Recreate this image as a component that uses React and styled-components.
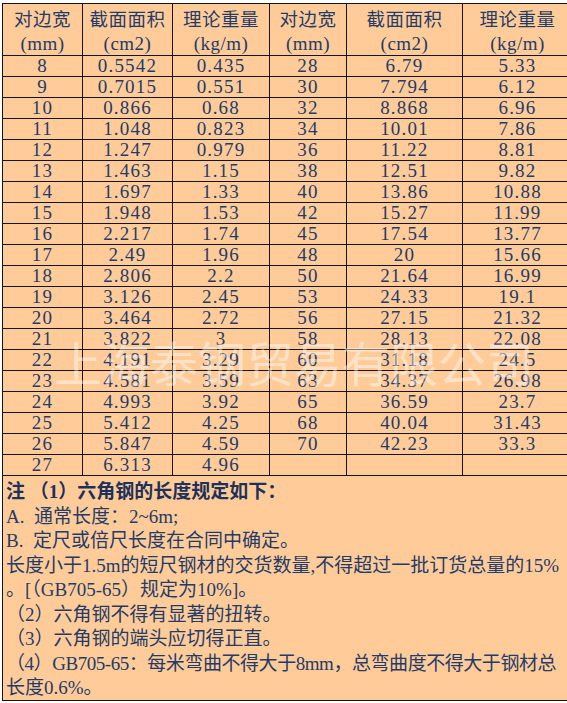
import React from "react";
import styled, { createGlobalStyle } from "styled-components";

const GlobalStyle = createGlobalStyle`
  html, body {
    margin: 0;
    padding: 0;
    background: #fff;
    overflow: hidden;
  }
`;

const Page = styled.div`
  position: relative;
  width: 567px;
  height: 703px;
  padding: 3px 0 0 2px;
  box-sizing: border-box;
  overflow: hidden;
`;

const Sheet = styled.div`
  display: grid;
  grid-template-columns: 80px 90px 97px 77px 116px 110px;
  grid-template-rows: 52px repeat(20, 21px) 225px;
  width: max-content;
  background: #ffcc99;
  border-top: 1px solid #151515;
  border-left: 1px solid #151515;
  color: #243b68;
`;

const Cell = styled.div`
  box-sizing: border-box;
  border-right: 1px solid #151515;
  border-bottom: 1px solid #151515;
  overflow: hidden;
`;

const HeadCell = styled(Cell)`
  display: flex;
  flex-direction: column;
  align-items: center;
  padding-top: 1px;
  line-height: 26px;
`;

const HeadTitle = styled.span`
  font-family: "Noto Sans CJK SC", sans-serif;
  font-size: 18.5px;
  letter-spacing: 0.5px;
`;

const HeadUnit = styled.span`
  font-family: "Liberation Serif", "Noto Sans CJK SC", serif;
  font-size: 19px;
  letter-spacing: 0.5px;
`;

const NumCell = styled(Cell)`
  font-family: "Liberation Serif", serif;
  font-size: 19px;
  letter-spacing: 1.2px;
  line-height: 20px;
  text-align: center;
`;

const Notes = styled(Cell)`
  grid-column: 1 / -1;
  padding: 4px 0 0 3px;
  font-family: "Liberation Serif", "Noto Sans CJK SC", serif;
  font-size: 19px;
  line-height: 24.5px;
`;

const NoteLine = styled.div`
  white-space: pre;
  font-weight: ${(p) => (p.$bold ? 700 : 400)};
  color: ${(p) => (p.$bold ? "#1d315a" : "inherit")};
  letter-spacing: ${(p) => (p.$tight ? "-0.45px" : "0")};
`;

const Watermark = styled.div`
  position: absolute;
  left: 54px;
  top: 337px;
  font-family: "Noto Sans CJK SC", sans-serif;
  font-size: 48px;
  line-height: 1;
  white-space: nowrap;
  color: rgba(255, 255, 255, 0.45);
  pointer-events: none;
`;

const heads = [
  ["对边宽", "(mm)"],
  ["截面面积", "(cm2)"],
  ["理论重量", "(kg/m)"],
];

const left = [
  ["8", "0.5542", "0.435"],
  ["9", "0.7015", "0.551"],
  ["10", "0.866", "0.68"],
  ["11", "1.048", "0.823"],
  ["12", "1.247", "0.979"],
  ["13", "1.463", "1.15"],
  ["14", "1.697", "1.33"],
  ["15", "1.948", "1.53"],
  ["16", "2.217", "1.74"],
  ["17", "2.49", "1.96"],
  ["18", "2.806", "2.2"],
  ["19", "3.126", "2.45"],
  ["20", "3.464", "2.72"],
  ["21", "3.822", "3"],
  ["22", "4.191", "3.29"],
  ["23", "4.581", "3.59"],
  ["24", "4.993", "3.92"],
  ["25", "5.412", "4.25"],
  ["26", "5.847", "4.59"],
  ["27", "6.313", "4.96"],
];

const right = [
  ["28", "6.79", "5.33"],
  ["30", "7.794", "6.12"],
  ["32", "8.868", "6.96"],
  ["34", "10.01", "7.86"],
  ["36", "11.22", "8.81"],
  ["38", "12.51", "9.82"],
  ["40", "13.86", "10.88"],
  ["42", "15.27", "11.99"],
  ["45", "17.54", "13.77"],
  ["48", "20", "15.66"],
  ["50", "21.64", "16.99"],
  ["53", "24.33", "19.1"],
  ["56", "27.15", "21.32"],
  ["58", "28.13", "22.08"],
  ["60", "31.18", "24.5"],
  ["63", "34.37", "26.98"],
  ["65", "36.59", "23.7"],
  ["68", "40.04", "31.43"],
  ["70", "42.23", "33.3"],
  ["", "", ""],
];

// 每行即单元格里的一行折行文字
const notes = [
  { text: "注 （1）六角钢的长度规定如下：", bold: true },
  { text: "A.  通常长度：2~6m;" },
  { text: "B.  定尺或倍尺长度在合同中确定。" },
  { text: "长度小于1.5m的短尺钢材的交货数量,不得超过一批订货总量的15%" },
  { text: "。[（GB705-65）规定为10%]。" },
  { text: "（2）六角钢不得有显著的扭转。" },
  { text: "（3）六角钢的端头应切得正直。" },
  { text: "（4）GB705-65：每米弯曲不得大于8mm，总弯曲度不得大于钢材总", tight: true },
  { text: "长度0.6%。" },
];

export default function App() {
  return (
    <Page>
      <GlobalStyle />
      <Sheet>
        {[...heads, ...heads].map(([t, u], i) => (
          <HeadCell key={"h" + i}>
            <HeadTitle>{t}</HeadTitle>
            <HeadUnit>{u}</HeadUnit>
          </HeadCell>
        ))}
        {left.map((row, r) =>
          [...row, ...right[r]].map((v, c) => (
            <NumCell key={r + "-" + c}>{v}</NumCell>
          ))
        )}
        <Notes>
          {notes.map((n, i) => (
            <NoteLine key={i} $bold={n.bold} $tight={n.tight}>
              {n.text}
            </NoteLine>
          ))}
        </Notes>
      </Sheet>
      <Watermark>上海泰钢贸易有限公司</Watermark>
    </Page>
  );
}
